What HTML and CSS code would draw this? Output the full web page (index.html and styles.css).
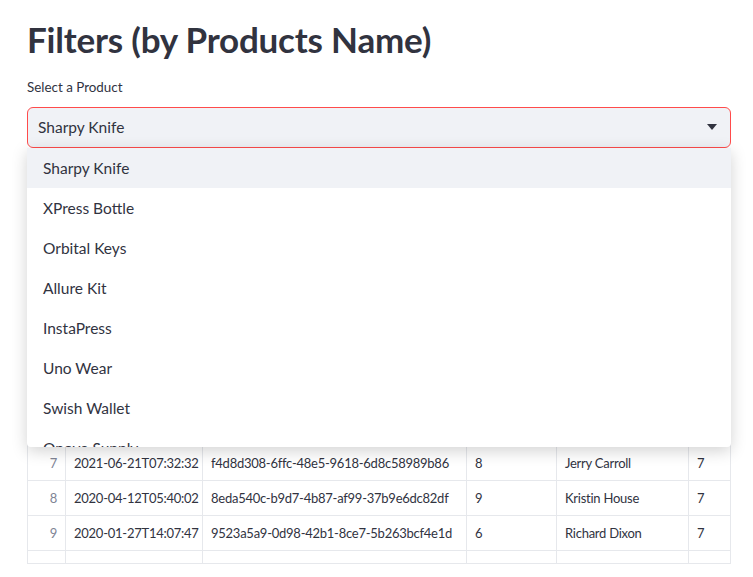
FILE: index.html
```html
<!DOCTYPE html>
<html lang="en">
<head>
<meta charset="utf-8">
<title>Filters</title>
<link rel="stylesheet" href="styles.css">
</head>
<body>
<main class="main">
  <h1 class="title">Filters (by Products Name)</h1>
  <label class="label">Select a Product</label>
  <div class="select-wrap">
    <div class="select">
      <span class="select-value">Sharpy Knife</span>
      <svg class="caret" width="10" height="6" viewBox="0 0 10 6"><path d="M0 0h10L5 6z" fill="#31333f"/></svg>
    </div>
    <ul class="menu">
      <li class="opt active">Sharpy Knife</li>
      <li class="opt">XPress Bottle</li>
      <li class="opt">Orbital Keys</li>
      <li class="opt">Allure Kit</li>
      <li class="opt">InstaPress</li>
      <li class="opt">Uno Wear</li>
      <li class="opt">Swish Wallet</li>
      <li class="opt">Onove Supply</li>
      <li class="opt">Wavy Pen</li>
    </ul>
  </div>
  <div class="grid">
    <table class="tbl">
      <colgroup>
        <col class="c1"><col class="c2"><col class="c3"><col class="c4"><col class="c5"><col class="c6">
      </colgroup>
      <thead>
        <tr><th></th><th>order_date</th><th>order_id</th><th>quantity</th><th>customer_name</th><th>rating</th></tr>
      </thead>
      <tbody>
        <tr><td class="idx">0</td><td>2021-03-14T10:12:05</td><td>1b2e7c90-3f4a-4c8e-9d21-7a6b5c4d3e2f</td><td>5</td><td>Laura Smith</td><td>7</td></tr>
        <tr><td class="idx">1</td><td>2020-11-02T18:45:21</td><td>2c3f8d01-4a5b-4d9f-8e32-8b7c6d5e4f30</td><td>3</td><td>Mark Evans</td><td>7</td></tr>
        <tr><td class="idx">2</td><td>2021-01-19T08:03:44</td><td>3d409e12-5b6c-4ea0-9f43-9c8d7e6f5041</td><td>7</td><td>Anna Perez</td><td>7</td></tr>
        <tr><td class="idx">3</td><td>2020-07-28T12:30:09</td><td>4e51af23-6c7d-4fb1-a054-ad9e8f706152</td><td>2</td><td>David Clark</td><td>7</td></tr>
        <tr><td class="idx">4</td><td>2021-05-06T21:17:38</td><td>5f62b034-7d8e-40c2-b165-beaf90817263</td><td>4</td><td>Emily Turner</td><td>7</td></tr>
        <tr><td class="idx">5</td><td>2020-09-15T03:55:16</td><td>6073c145-8e9f-41d3-c276-cfb0a1928374</td><td>10</td><td>James Miller</td><td>7</td></tr>
        <tr><td class="idx">6</td><td>2021-02-23T16:28:57</td><td>7184d256-9fa0-42e4-d387-d0c1b2a39485</td><td>1</td><td>Sarah Moore</td><td>7</td></tr>
        <tr><td class="idx">7</td><td>2021-06-21T07:32:32</td><td>f4d8d308-6ffc-48e5-9618-6d8c58989b86</td><td>8</td><td>Jerry Carroll</td><td>7</td></tr>
        <tr><td class="idx">8</td><td>2020-04-12T05:40:02</td><td>8eda540c-b9d7-4b87-af99-37b9e6dc82df</td><td>9</td><td>Kristin House</td><td>7</td></tr>
        <tr><td class="idx">9</td><td>2020-01-27T14:07:47</td><td>9523a5a9-0d98-42b1-8ce7-5b263bcf4e1d</td><td>6</td><td>Richard Dixon</td><td>7</td></tr>
        <tr><td class="idx">10</td><td>2021-08-09T19:22:13</td><td>a1b4c6d8-2e3f-4a5b-9c7d-6e8f0a1b2c3d</td><td>3</td><td>Ralph Hicks</td><td>7</td></tr>
        <tr><td class="idx">11</td><td>2020-12-30T11:48:36</td><td>b2c5d7e9-3f40-4b6c-8d8e-7f901b2c3d4e</td><td>5</td><td>Tina Howell</td><td>7</td></tr>
      </tbody>
    </table>
  </div>
</main>
</body>
</html>
```

FILE: styles.css
```css
* { box-sizing: border-box; }
html, body { margin: 0; padding: 0; background: #ffffff; }
body {
  font-family: Lato, "Noto Sans", sans-serif;
  color: #31333f;
  width: 753px;
  height: 577px;
  overflow: hidden;
}
.main {
  padding: 14px 22px 0 27px;
  display: flex;
  flex-direction: column;
}
.title {
  margin: 0;
  font-size: 35px;
  font-weight: 700;
  line-height: 50px;
  color: #31333f;
  letter-spacing: -0.2px;
}
.label {
  font-size: 13.4px;
  line-height: 20px;
  margin-top: 13px;
  color: #31333f;
}
.select-wrap {
  position: relative;
  margin-top: 10px;
  z-index: 5;
}
.select {
  height: 41px;
  border: 1px solid #ff4b4b;
  border-radius: 6px;
  background: #f0f2f6;
  display: flex;
  align-items: center;
  justify-content: space-between;
  padding: 0 13px 1px 10px;
  font-size: 15.5px;
}
.caret { display: block; }
.menu {
  position: absolute;
  top: 41px;
  left: 0;
  right: 0;
  height: 299px;
  margin: 0;
  padding: 0;
  list-style: none;
  background: #ffffff;
  overflow: hidden;
  box-shadow: 0 4px 16px rgba(0, 0, 0, 0.18);
  border-radius: 0 0 4px 4px;
}
.opt {
  height: 40px;
  display: flex;
  align-items: center;
  padding-left: 16px;
  padding-bottom: 1px;
  font-size: 15.5px;
  color: #31333f;
}
.opt.active { background: #f0f2f6; }
.grid {
  margin-top: 17px;
  height: 399px;
  border: 1px solid #e6e8ec;
  overflow: hidden;
}
.tbl {
  border-collapse: separate;
  border-spacing: 0;
  table-layout: fixed;
  width: 702px;
  font-size: 13px;
  letter-spacing: -0.25px;
}
.c1 { width: 38px; }
.c2 { width: 137px; }
.c3 { width: 264px; }
.c4 { width: 90px; }
.c5 { width: 132px; }
.c6 { width: 41px; }
.tbl th, .tbl td {
  height: 35px;
  padding: 0 8px;
  border-right: 1px solid #e6e8ec;
  border-bottom: 1px solid #e6e8ec;
  white-space: nowrap;
  overflow: hidden;
  text-align: left;
  font-weight: 400;
  color: #31333f;
}
.tbl th { color: #808495; }
.tbl th:last-child, .tbl td:last-child { border-right: none; }
.tbl td.idx { text-align: right; color: #808495; }
```
